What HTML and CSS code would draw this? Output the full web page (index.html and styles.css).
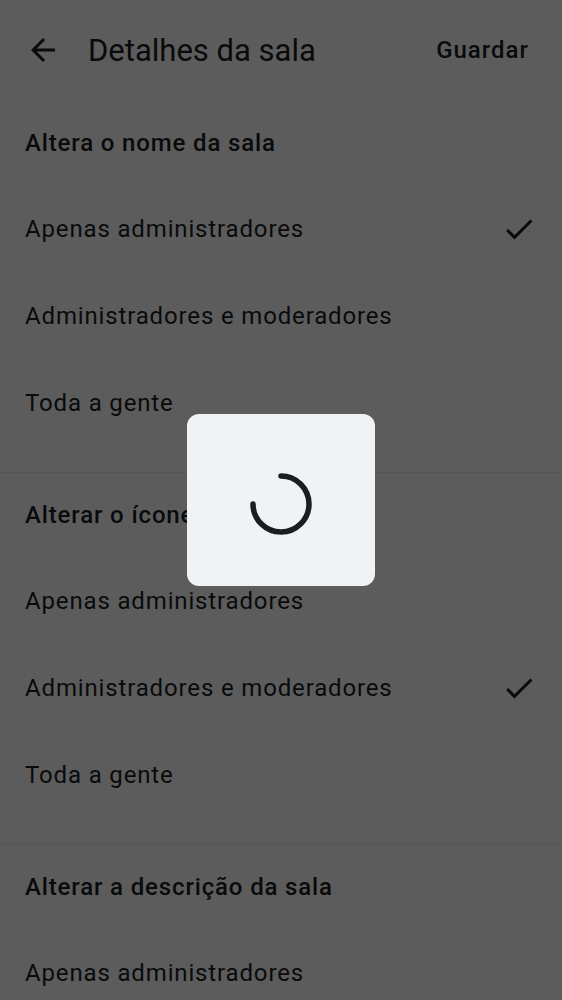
FILE: index.html
```html
<!DOCTYPE html>
<html lang="pt">
<head>
<meta charset="utf-8">
<title>Detalhes da sala</title>
<link rel="stylesheet" href="styles.css">
</head>
<body>
<div class="screen">
  <header class="topbar">
    <span class="nav-icon">
      <svg viewBox="0 0 24 24" width="36" height="36"><path d="M20 11H7.83l5.59-5.59L12 4l-8 8 8 8 1.41-1.41L7.83 13H20v-2z" fill="currentColor"/></svg>
    </span>
    <h1 class="title">Detalhes da sala</h1>
    <span class="action">Guardar</span>
  </header>

  <section class="group">
    <div class="group-title">Altera o nome da sala</div>
    <div class="option"><span>Apenas administradores</span><svg class="check" viewBox="0 0 24 24" width="36" height="36"><path d="M9 16.17L4.83 12l-1.42 1.41L9 19 21 7l-1.41-1.41z" fill="currentColor"/></svg></div>
    <div class="option"><span>Administradores e moderadores</span></div>
    <div class="option"><span>Toda a gente</span></div>
  </section>
  <div class="divider"></div>

  <section class="group">
    <div class="group-title">Alterar o ícone da sala</div>
    <div class="option"><span>Apenas administradores</span></div>
    <div class="option"><span>Administradores e moderadores</span><svg class="check" viewBox="0 0 24 24" width="36" height="36"><path d="M9 16.17L4.83 12l-1.42 1.41L9 19 21 7l-1.41-1.41z" fill="currentColor"/></svg></div>
    <div class="option"><span>Toda a gente</span></div>
  </section>
  <div class="divider"></div>

  <section class="group">
    <div class="group-title">Alterar a descrição da sala</div>
    <div class="option"><span>Apenas administradores</span></div>
    <div class="option"><span>Administradores e moderadores</span></div>
    <div class="option"><span>Toda a gente</span></div>
  </section>
</div>

<div class="scrim"></div>
<div class="loader">
  <svg viewBox="0 0 64 64" width="64" height="64"><path d="M32 4 A28 28 0 1 1 4 32" fill="none" stroke="currentColor" stroke-width="5.5" stroke-linecap="round"/></svg>
</div>
</body>
</html>
```
FILE: styles.css
```css
html, body {
  margin: 0;
  padding: 0;
  background: #ffffff;
}
body {
  font-family: Roboto, "Noto Sans", sans-serif;
  color: #1b1d22;
  overflow: hidden;
  height: 1000px;
}
.screen {
  width: 562px;
  height: 1000px;
  overflow: hidden;
}
.topbar {
  height: 100px;
  display: flex;
  align-items: center;
  padding: 0 33px 0 25px;
}
.nav-icon {
  width: 36px;
  height: 36px;
  display: flex;
  color: #1b1d22;
}
.title {
  margin: 0 0 0 27px;
  font-size: 31px;
  font-weight: 400;
  flex: 1;
  letter-spacing: 0;
}
.action {
  font-size: 24px;
  font-weight: 500;
  letter-spacing: 1px;
}
.group {
  display: flex;
  flex-direction: column;
}
.group-title {
  height: 84px;
  display: flex;
  align-items: center;
  padding: 0 25px;
  font-size: 24px;
  font-weight: 500;
  letter-spacing: 0.85px;
}
.option {
  height: 87px;
  display: flex;
  align-items: center;
  justify-content: space-between;
  padding: 0 25px;
  font-size: 24px;
  letter-spacing: 0.85px;
}
.check {
  color: #1b1d22;
  flex: none;
}
.divider {
  height: 1px;
  background: #ececec;
  margin-top: 26px;
}
.scrim {
  position: fixed;
  inset: 0;
  background: rgba(0, 0, 0, 0.64);
}
.loader {
  position: fixed;
  left: 187px;
  top: 414px;
  width: 188px;
  height: 172px;
  background: #f0f2f6;
  border-radius: 12px;
  display: flex;
  align-items: center;
  justify-content: center;
  padding-top: 8px;
  box-sizing: border-box;
  color: #1b1d22;
}
.group:first-of-type .group-title {
  height: 85px;
}
```
